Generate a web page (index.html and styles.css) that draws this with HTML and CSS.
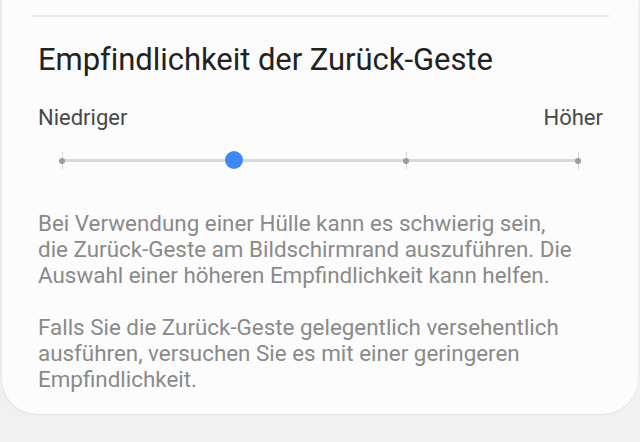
FILE: index.html
```html
<!DOCTYPE html>
<html lang="de">
<head>
<meta charset="utf-8">
<link rel="stylesheet" href="styles.css">
</head>
<body>
<div class="card">
  <div class="sep"></div>
  <h1 class="title">Empfindlichkeit der Zurück-Geste</h1>
  <div class="labels"><span>Niedriger</span><span>Höher</span></div>
  <div class="slider">
    <div class="track"></div>
    <span class="tick" style="left:0%"></span>
    <span class="tick" style="left:33.333%"></span>
    <span class="tick" style="left:66.667%"></span>
    <span class="tick" style="left:100%"></span>
    <span class="thumb" style="left:33.333%"></span>
  </div>
  <p class="desc">Bei Verwendung einer Hülle kann es schwierig sein,<br>die Zurück-Geste am Bildschirmrand auszuführen. Die<br>Auswahl einer höheren Empfindlichkeit kann helfen.</p>
  <p class="desc">Falls Sie die Zurück-Geste gelegentlich versehentlich<br>ausführen, versuchen Sie es mit einer geringeren<br>Empfindlichkeit.</p>
</div>
</body>
</html>
```
FILE: styles.css
```css
html, body {
  margin: 0;
  padding: 0;
  background: #f1f1f1;
  width: 640px;
  height: 442px;
  overflow: hidden;
  font-family: Roboto, "Noto Sans", sans-serif;
}
.card {
  box-sizing: border-box;
  margin: 0 2px 0 1px;
  height: 414px;
  background: #fcfcfc;
  border-left: 1px solid #e9e9e9;
  border-radius: 0 0 36px 36px;
  padding: 15px 35px 0 36px;
  box-shadow: 0 1px 2px rgba(0,0,0,0.06);
}
.sep {
  height: 2px;
  background: #e6e6e6;
  margin: 0 -6px 0 -6px;
}
.title {
  margin: 25px 0 0 0;
  font-size: 31px;
  font-weight: 400;
  color: #222;
  line-height: 36px;
  letter-spacing: -0.05px;
}
.labels {
  display: flex;
  justify-content: space-between;
  margin-top: 27px;
  font-size: 22px;
  color: #484848;
  line-height: 26px;
}
.slider {
  position: relative;
  margin: 13px 25px 0 24px;
  height: 32px;
}
.track {
  position: absolute;
  left: 0;
  right: 0;
  top: 15px;
  height: 3px;
  background: #d9d9d9;
}
.tick {
  position: absolute;
  top: 8px;
  width: 1px;
  height: 17px;
  margin-left: -0.5px;
  background: #d4d4d4;
}
.tick::after {
  content: "";
  position: absolute;
  left: -2.5px;
  top: 5.5px;
  width: 6px;
  height: 6px;
  border-radius: 50%;
  background: #9c9c9c;
}
.thumb {
  position: absolute;
  top: 7px;
  width: 18px;
  height: 18px;
  margin-left: -9px;
  border-radius: 50%;
  background: #3d8af7;
}
.desc {
  margin: 34px 0 0 0;
  font-size: 22.4px;
  line-height: 26px;
  color: #8a8a8a;
}
.desc + .desc {
  margin-top: 26px;
}
```
